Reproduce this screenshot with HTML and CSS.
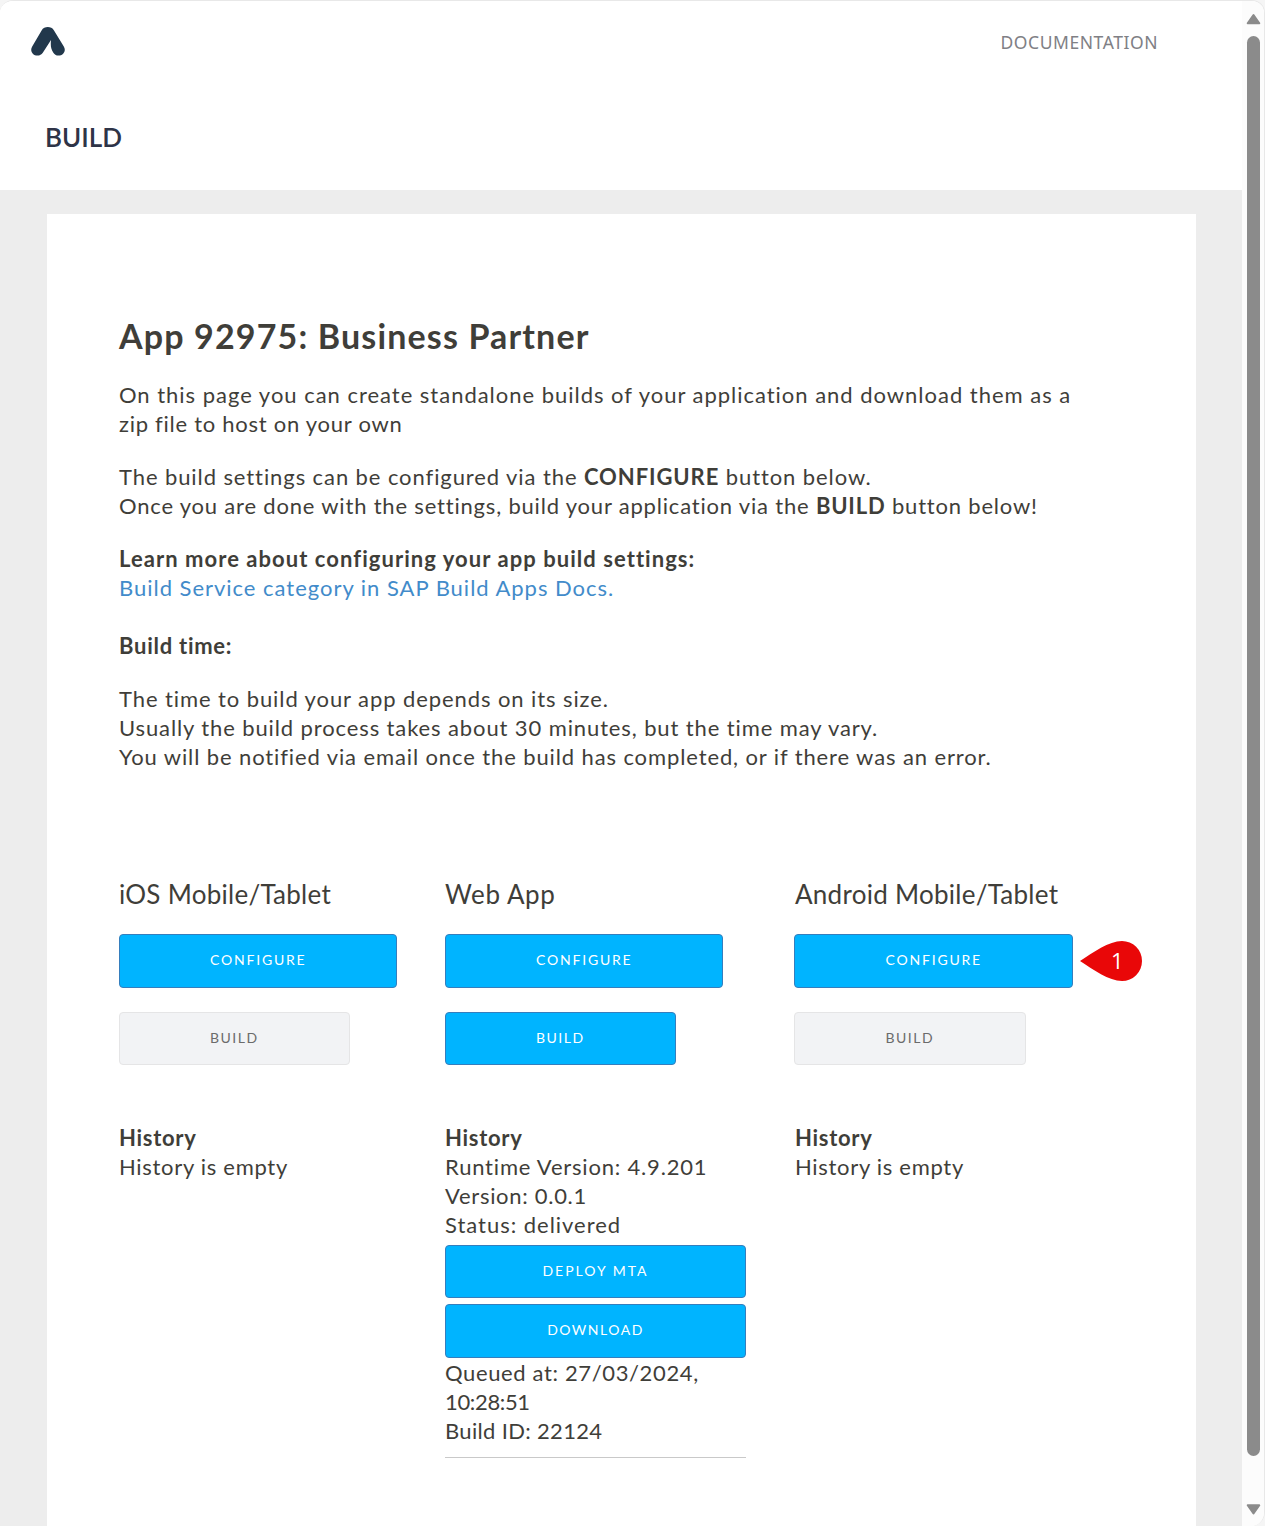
FILE: index.html
```html
<!DOCTYPE html>
<html lang="en">
<head>
<meta charset="utf-8">
<title>Build</title>
<link rel="stylesheet" href="styles.css">
</head>
<body>
<div class="window">
  <div class="page">
    <header class="header">
      <div class="topbar">
        <svg class="logo" width="34" height="30" viewBox="31 26 34 30"><path fill="#22384c" d="M41.600 30.400C44.400 26 51.200 26 54 30.400L63.800 46.400C66.600 51 63 55.600 58.600 55.600C56 55.600 54.400 54.400 53.200 52.400C51 49 50.400 46.600 51 40L42.800 52.800C41.500 54.700 39.800 55.600 37.400 55.600C33 55.600 29.400 51 32.200 46.400Z"/></svg>
        <a class="doc-link">DOCUMENTATION</a>
      </div>
      <h1 class="page-title">BUILD</h1>
    </header>
    <main class="content">
      <section class="card">
        <h2 class="app-name">App 92975: Business Partner</h2>
        <p class="text"><span class="track-xl">On this page you can create standalone builds of your application and download them as a</span><br><span class="track-s">zip file to host on your own</span></p>
        <p class="text"><span class="track-l">The build settings can be configured via the <b>CONFIGURE</b> button below.</span><br><span class="track-m">Once you are done with the settings, build your application via the <b>BUILD</b> button below!</span></p>
        <p class="text"><b class="track-xxl">Learn more about configuring your app build settings:</b><br><a class="link">Build Service category in SAP Build Apps Docs.</a><br><br><b class="track-s">Build time:</b></p>
        <p class="text"><span class="track-l">The time to build your app depends on its size.</span><br><span>Usually the build process takes about 30 minutes, but the time may vary.</span><br><span>You will be notified via email once the build has completed, or if there was an error.</span></p>
        <div class="targets">
          <div class="target">
            <h3 class="target-name">iOS Mobile/Tablet</h3>
            <div class="btn configure"><span>CONFIGURE</span></div>
            <div class="btn build disabled"><span>BUILD</span></div>
            <div class="history"><b>History</b><span class="empty">History is empty</span></div>
          </div>
          <div class="target">
            <h3 class="target-name web">Web App</h3>
            <div class="btn configure"><span>CONFIGURE</span></div>
            <div class="btn build"><span>BUILD</span></div>
            <div class="history">
              <b>History</b>
              <span class="runtime">Runtime Version: 4.9.201</span>
              <span class="version">Version: 0.0.1</span>
              <span class="status">Status: delivered</span>
              <div class="btn wide deploy"><span>DEPLOY MTA</span></div>
              <div class="btn wide download"><span>DOWNLOAD</span></div>
              <span class="queued">Queued at: 27/03/2024,</span>
              <span class="time">10:28:51</span>
              <span class="build-id">Build ID: 22124</span>
              <hr class="rule">
            </div>
          </div>
          <div class="target android">
            <h3 class="target-name">Android Mobile/Tablet</h3>
            <div class="btn configure"><span>CONFIGURE</span>
              <div class="callout"><svg width="62" height="40" viewBox="0 0 62 40"><path fill="#e90708" d="M0 20C13 11.500 29 0 42 0A20 20 0 0 1 42 40C29 40 13 28.500 0 20Z"/></svg><span class="callout-num">1</span></div>
            </div>
            <div class="btn build disabled"><span>BUILD</span></div>
            <div class="history"><b>History</b><span class="empty">History is empty</span></div>
          </div>
        </div>
      </section>
    </main>
  </div>
  <div class="scrollbar">
    <svg width="15" height="12" viewBox="0 0 15 12"><path fill="#8b8b8b" stroke="#8b8b8b" stroke-width="2" stroke-linejoin="round" d="M7.500 2L13.300 10.300H1.700Z"/></svg>
    <div class="thumb"></div>
    <svg width="15" height="12" viewBox="0 0 15 12"><path fill="#8b8b8b" stroke="#8b8b8b" stroke-width="2" stroke-linejoin="round" d="M7.500 9.500L13.300 1.200H1.700Z"/></svg>
  </div>
</div>
</body>
</html>
```
FILE: styles.css
```css
* { box-sizing: border-box; }
body { margin: 0; background: #f5f5f5; font-family: Lato, "Liberation Sans", sans-serif; color: #3f3e39; }
.window { display: flex; width: 1265px; height: 1526px; overflow: hidden; border: solid #e8e8e8; border-width: 1px 1px 0 0; border-radius: 13px 13px 14px 0; background: #fff; }
.page { width: 1242px; flex: none; display: flex; flex-direction: column; }
.header { height: 189px; flex: none; background: #fff; }
.topbar { display: flex; justify-content: space-between; align-items: flex-start; height: 90px; padding: 25px 84px 0 31px; }
.doc-link { font: 17.5px/32px "Noto Sans", sans-serif; letter-spacing: 0.55px; color: #808085; }
.page-title { margin: 28px 0 0 45px; font-size: 26px; line-height: 36px; font-weight: 600; color: #2e3447; }
.content { flex: 1; background: #ededed; padding: 24px 46px 0 47px; min-height: 0; }
.card { height: 1312px; background: #fff; padding: 100px 72px 0; }
.app-name { margin: 0 0 22px; font-size: 34px; line-height: 44px; font-weight: 700; letter-spacing: 1.15px; white-space: nowrap; }
.text { margin: 0 0 24px; font-size: 22px; line-height: 29px; letter-spacing: 0.885px; white-space: nowrap; }
.track-s { letter-spacing: 0.73px; }
.track-m { letter-spacing: 0.81px; }
.track-l { letter-spacing: 0.91px; }
.track-xl { letter-spacing: 0.98px; }
.track-xxl { letter-spacing: 1.05px; }
.link { color: #428bca; letter-spacing: 0.98px; }
.targets { display: grid; grid-template-columns: 326px 349px 302px; margin-top: 105px; }
.target-name { margin: 0 0 22px; font-size: 26px; line-height: 36px; font-weight: 400; letter-spacing: 0.27px; white-space: nowrap; }
.target-name.web { letter-spacing: 0.6px; }
.btn { position: relative; display: flex; align-items: center; padding: 0 0 1px 90px; border: 1px solid #357ebd; border-radius: 4px; background: #00b4ff; color: #fff; font-size: 14px; letter-spacing: 1.5px; white-space: nowrap; }
.configure { width: 278px; height: 54px; margin-bottom: 24px; padding-bottom: 3px; letter-spacing: 1.8px; }
.build { width: 231px; height: 53px; padding-bottom: 2px; }
.disabled { background: #f2f3f5; border-color: #e5e5e6; color: #6b6b6b; }
.history { display: flex; flex-direction: column; align-items: flex-start; margin-top: 58px; font-size: 22px; line-height: 29px; letter-spacing: 0.7px; white-space: nowrap; }
.android .target-name, .android .history { padding-left: 1px; }
.android .configure { width: 279px; padding-left: 90.5px; }
.android .build { width: 232px; padding-left: 90.5px; }
.wide { width: 301px; justify-content: center; padding: 0 0 2px; }
.deploy { height: 53px; margin: 6px 0; letter-spacing: 2px; }
.download { height: 54px; padding-bottom: 3px; }
.runtime { letter-spacing: 0.8px; }
.status { letter-spacing: 0.98px; }
.queued { letter-spacing: 0.63px; }
.time { letter-spacing: -0.35px; }
.build-id { letter-spacing: 0.33px; }
.rule { width: 301px; height: 1px; margin: 12px 0 0; border: 0; background: #c9c9c9; }
.callout { position: absolute; left: 285px; top: 6px; width: 62px; height: 40px; }
.callout svg { display: block; }
.callout-num { position: absolute; left: 31px; top: 5px; font: 500 22px/28px "Open Sans", sans-serif; letter-spacing: 0; }
.scrollbar { width: 22px; flex: none; background: #fcfcfc; display: flex; flex-direction: column; align-items: center; padding: 12px 0 0 1px; }
.scrollbar svg { flex: none; }
.thumb { width: 13px; height: 1420px; margin: 11px 0 48px; border-radius: 7px; background: #8b8b8b; flex: none; }
```
